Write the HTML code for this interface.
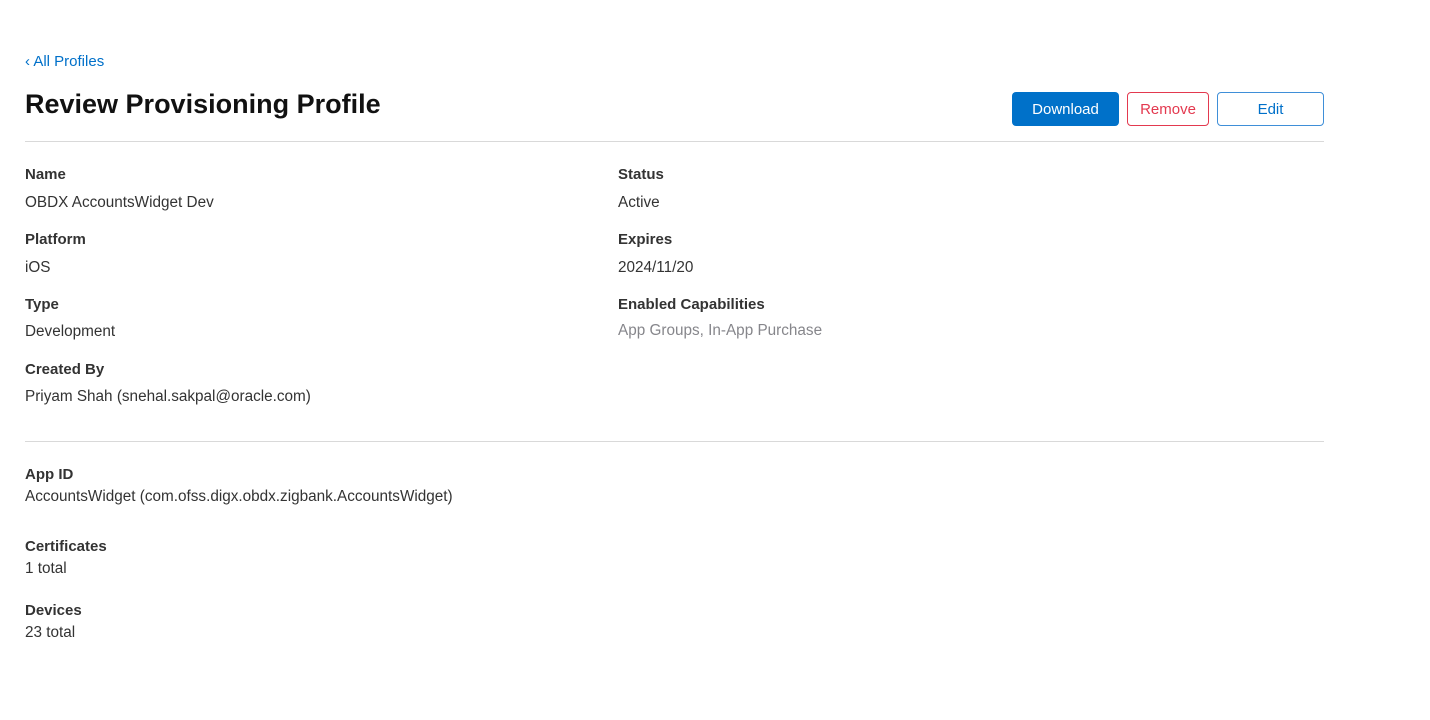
<!DOCTYPE html>
<html><head><style>
body{margin:0;width:1430px;height:720px;background:#fff;font-family:"Liberation Sans",sans-serif;position:relative;overflow:hidden;color:#1d1d1f}
.a{position:absolute;white-space:nowrap;line-height:20px}
.l{font-size:15px;font-weight:bold;color:#333;transform:translateY(-8px)}
.v{font-size:15.3px;color:#333;transform:translateY(-8px)}
.g{color:#86868b}
.hr{position:absolute;left:25px;width:1299px;height:1px;background:#d9d9d9}
.b{position:absolute;top:92px;height:34px;box-sizing:border-box;border-radius:4px;font-size:15px;display:flex;align-items:center;justify-content:center}
</style></head><body>
<div class="a" style="left:25px;top:52px;font-size:15px;color:#0070c9">‹ All Profiles</div>
<div class="a" style="left:25px;top:89px;font-size:27px;line-height:30px;font-weight:bold;color:#111">Review Provisioning Profile</div>
<div class="b" style="left:1012px;width:107px;background:#0071c9;color:#fff">Download</div>
<div class="b" style="left:1127px;width:82px;border:1px solid #e3394f;color:#e3394f">Remove</div>
<div class="b" style="left:1217px;width:107px;border:1px solid #3f8fd8;color:#0070c9">Edit</div>
<div class="hr" style="top:141px"></div>
<div class="a l" style="left:25px;top:173px">Name</div>
<div class="a v" style="left:25px;top:201px">OBDX AccountsWidget Dev</div>
<div class="a l" style="left:25px;top:238px">Platform</div>
<div class="a v" style="left:25px;top:266px">iOS</div>
<div class="a l" style="left:25px;top:303px">Type</div>
<div class="a v" style="left:25px;top:330px">Development</div>
<div class="a l" style="left:25px;top:368px">Created By</div>
<div class="a v" style="left:25px;top:395px">Priyam Shah (snehal.sakpal@oracle.com)</div>
<div class="a l" style="left:618px;top:173px">Status</div>
<div class="a v" style="left:618px;top:201px">Active</div>
<div class="a l" style="left:618px;top:238px">Expires</div>
<div class="a v" style="left:618px;top:266px">2024/11/20</div>
<div class="a l" style="left:618px;top:303px">Enabled Capabilities</div>
<div class="a v g" style="left:618px;top:329px">App Groups, In-App Purchase</div>
<div class="hr" style="top:441px"></div>
<div class="a l" style="left:25px;top:473px">App ID</div>
<div class="a v" style="left:25px;top:495px">AccountsWidget (com.ofss.digx.obdx.zigbank.AccountsWidget)</div>
<div class="a l" style="left:25px;top:545px">Certificates</div>
<div class="a v" style="left:25px;top:567px">1 total</div>
<div class="a l" style="left:25px;top:609px">Devices</div>
<div class="a v" style="left:25px;top:631px">23 total</div>
</body></html>
